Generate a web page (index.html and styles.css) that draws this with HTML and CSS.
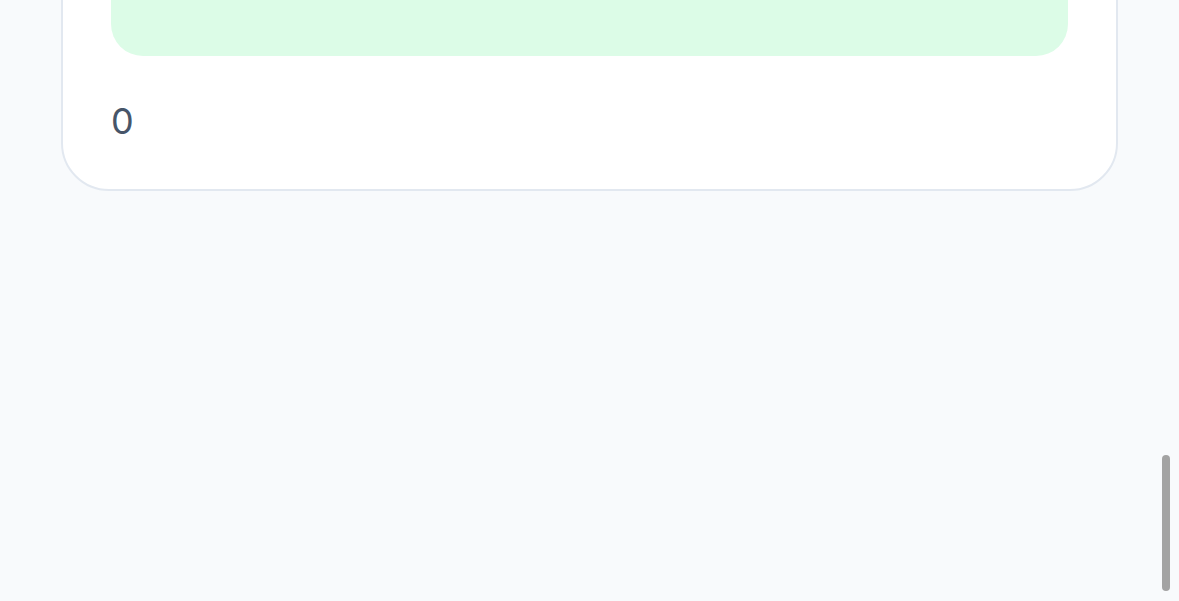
FILE: index.html
```html
<!DOCTYPE html>
<html lang="en">
<head>
<meta charset="utf-8">
<title>Card</title>
<link rel="stylesheet" href="styles.css">
</head>
<body>
<div class="viewport">
  <section class="card">
    <div class="chart"></div>
    <div class="value">0</div>
  </section>
  <div class="scroll-thumb"></div>
</div>
</body>
</html>
```
FILE: styles.css
```css
html, body {
  margin: 0;
  padding: 0;
  background: #f8fafc;
  font-family: Inter, "Noto Sans", "Liberation Sans", sans-serif;
}

.viewport {
  height: 601px;
  overflow: hidden;
  display: flex;
  flex-direction: column;
  justify-content: flex-end;
  padding: 0 61px 410px 61px;
  box-sizing: border-box;
}

.card {
  flex: none;
  background: #ffffff;
  border: 2px solid #e2e8f0;
  border-radius: 48px;
  padding: 48px;
  display: flex;
  flex-direction: column;
}

.chart {
  height: 320px;
  background: #dcfce7;
  border-radius: 32px;
}

.value {
  margin-top: 45px;
  font-size: 36px;
  line-height: 40px;
  color: #475569;
  font-weight: 400;
}

.scroll-thumb {
  position: fixed;
  right: 9px;
  top: 455px;
  width: 8px;
  height: 136px;
  border-radius: 4px;
  background: #a3a3a3;
}
```
